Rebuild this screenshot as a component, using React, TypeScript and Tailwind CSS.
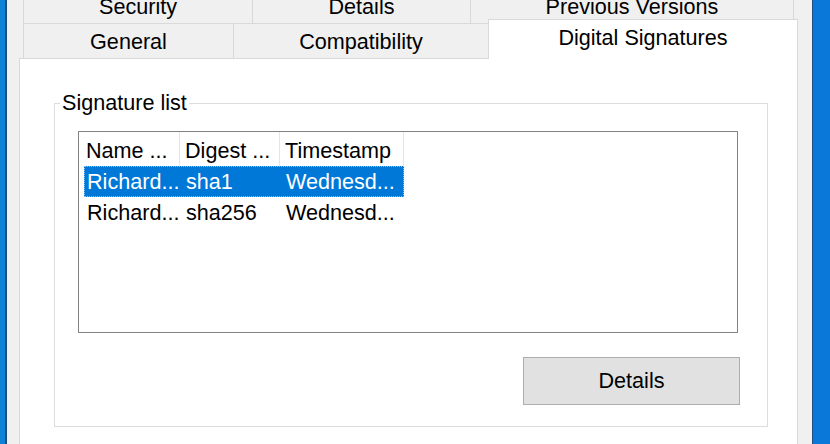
const topTabs = [
  { label: "Security", w: "w-[229px]" },
  { label: "Details", w: "w-[218px]" },
  { label: "Previous Versions", w: "w-[324px] border-r" },
];

const columns = [
  { label: "Name ...", w: "w-[101px] pl-[7px]" },
  { label: "Digest ...", w: "w-[100px] pl-[5px]" },
  { label: "Timestamp", w: "w-[124px] pl-[5px]" },
];

const signatures = [
  { name: "Richard...", digest: "sha1", time: "Wednesd...", selected: true },
  { name: "Richard...", digest: "sha256", time: "Wednesd...", selected: false },
];

function SignatureList() {
  return (
    <div className="h-[202px] w-[660px] border border-[#828282] bg-white">
      <div className="flex h-[34px]">
        {columns.map((c) => (
          <div
            key={c.label}
            className={`flex items-center border-r border-[#e5e5e5] pt-[3px] ${c.w}`}
          >
            {c.label}
          </div>
        ))}
      </div>
      {signatures.map((s, i) => (
        <div
          key={i}
          className={`ml-[5px] flex h-[31px] w-[320px] items-center ${
            s.selected
              ? "bg-[#0078d7] text-white outline-1 -outline-offset-1 outline-dotted outline-[#8cc2f0]"
              : ""
          }`}
        >
          <span className="w-[97px] pl-[3px]">{s.name}</span>
          <span className="w-[100px] pl-[5px]">{s.digest}</span>
          <span className="w-[123px] pl-[5px]">{s.time}</span>
        </div>
      ))}
    </div>
  );
}

export default function App() {
  return (
    <div className="flex h-[444px] w-[830px] overflow-hidden bg-[#f0f0f0] font-['Liberation_Sans',Arial,sans-serif] text-[21.6px] leading-[24px] text-black">
      <div className="w-[5px] bg-[#0f82d8]" />
      <div className="w-[2px] bg-[#1b4e7c]" />

      <div className="flex w-[805px] flex-col pl-[12px]">
        <div className="-mt-[12px] flex w-[779px] flex-1 flex-col">
          {/* back row of tabs */}
          <div className="ml-[4px] flex h-[35px]">
            {topTabs.map((t) => (
              <div
                key={t.label}
                className={`border-l border-t border-[#d9d9d9] pt-[6px] text-center ${t.w}`}
              >
                {t.label}
              </div>
            ))}
          </div>

          {/* front row of tabs */}
          <div className="ml-[4px] flex h-[35px] items-start">
            <div className="h-[35px] w-[210px] border-l border-t border-[#d9d9d9] pt-[6px] text-center">
              General
            </div>
            <div className="h-[35px] w-[255px] border-l border-t border-[#d9d9d9] pt-[6px] text-center">
              Compatibility
            </div>
            <div className="relative z-10 -mt-[4px] h-[40px] w-[310px] border-x border-t border-[#d9d9d9] bg-white pt-[6px] text-center">
              Digital Signatures
            </div>
          </div>

          {/* page */}
          <div className="flex-1 border-x border-t border-[#d9d9d9] bg-white">
            <fieldset className="ml-[34px] mt-[32px] w-[714px] border border-[#dcdcdc]">
              <legend className="ml-[5px] px-[2px]">Signature list</legend>
              <div className="flex w-[685px] flex-col pb-[21px] pl-[23px] pt-[16px]">
                <SignatureList />
                <div className="mt-[24px] flex w-[662px] justify-end">
                  <button className="h-[48px] w-[217px] border border-[#adadad] bg-[#e1e1e1]">
                    Details
                  </button>
                </div>
              </div>
            </fieldset>
          </div>
        </div>
      </div>

      <div className="w-[1px] bg-[#1d4f86]" />
      <div className="flex-1 bg-[#0a78d8]" />
    </div>
  );
}
